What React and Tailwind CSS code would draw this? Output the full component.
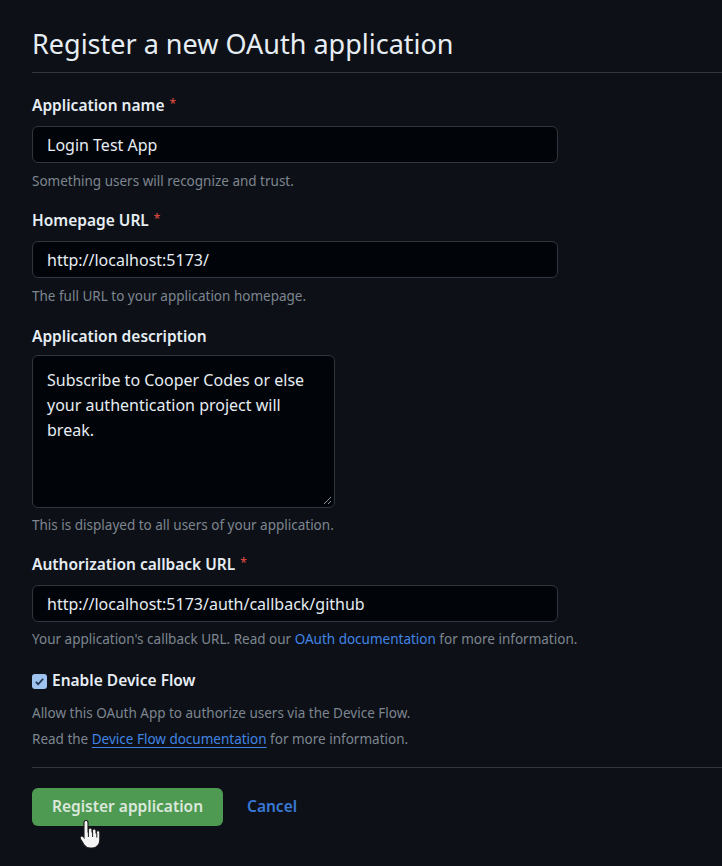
import React from 'react';

// Shared field styles
const font = "font-['Noto_Sans','Open_Sans',sans-serif]";

const Label = ({ children, required }) => (
  <div className="h-5 text-[15.5px] leading-5 font-semibold text-[#e6edf3]">
    {children}
    {required && <span className="relative -top-[3px] ml-[5px] text-[12px] text-[#d1453f]">*</span>}
  </div>
);

const Hint = ({ children, className = '' }) => (
  <p className={`text-[13.5px] leading-[18px] text-[#7d8590] ${className}`}>{children}</p>
);

const TextInput = ({ value }) => (
  <div className="mt-[11px] flex h-[37px] w-[526px] items-center rounded-md border border-[#30363d] bg-[#010409] px-[14px] text-[16px] text-[#e6edf3]">
    {value}
  </div>
);

// Hand cursor drawn over the button
const HandCursor = () => (
  <svg className="absolute left-[78px] top-[818px]" width="26" height="32" viewBox="0 0 26 32">
    <path
      d="M8 2.5c1.2 0 2 .9 2 2V14h.4v-2.2c0-1.1.8-1.9 1.8-1.9s1.8.8 1.8 1.9V14h.4v-1.3c0-1 .8-1.8 1.8-1.8s1.8.8 1.8 1.8V15h.4v-.6c0-1 .7-1.7 1.7-1.7s1.7.7 1.7 1.7v7.3c0 4.6-3 8.3-7.6 8.3h-2.3c-2.6 0-4.4-1.2-5.8-3.3L2.5 21c-.6-.9-.4-2 .4-2.6.8-.6 1.9-.4 2.6.4l.5.7V4.5c0-1.1.8-2 2-2z"
      fill="#f4f4f4"
      stroke="#1a1a1a"
      strokeWidth="1.1"
    />
    <path d="M10.4 14v5M14.6 14v5M18.8 15v4.5" stroke="#1a1a1a" strokeWidth="1" />
  </svg>
);

export default function App() {
  return (
    <div className={`relative min-h-[866px] w-full overflow-hidden bg-[#0d1117] pl-8 ${font}`}>
      {/* Page heading */}
      <div className="border-b border-[#30363d] pt-[26px] pb-[10px]">
        <h1 className="text-[27px] leading-9 font-normal text-[#e6edf3]">Register a new OAuth application</h1>
      </div>

      <div className="pt-[22px]">
        <Label required>Application name</Label>
        <TextInput value="Login Test App" />
        <Hint className="mt-[9px]">Something users will recognize and trust.</Hint>

        <div className="mt-[20px]">
          <Label required>Homepage URL</Label>
          <TextInput value="http://localhost:5173/" />
          <Hint className="mt-[9px]">The full URL to your application homepage.</Hint>
        </div>

        <div className="mt-[21px]">
          <Label>Application description</Label>
          <div className="relative mt-[9px] h-[153px] w-[303px] rounded-md border border-[#30363d] bg-[#010409] px-[14px] py-[12px] text-[16px] leading-[25px] text-[#e6edf3]">
            Subscribe to Cooper Codes or else your authentication project will break.
            <svg className="absolute right-[2px] bottom-[2px]" width="9" height="9" viewBox="0 0 9 9">
              <path d="M8 1L1 8M8 5L5 8" stroke="#8b949e" strokeWidth="1" />
            </svg>
          </div>
          <Hint className="mt-[8px]">This is displayed to all users of your application.</Hint>
        </div>

        <div className="mt-[20px]">
          <Label required>Authorization callback URL</Label>
          <TextInput value="http://localhost:5173/auth/callback/github" />
          <Hint className="mt-[8px]">
            Your application's callback URL. Read our{' '}
            <span className="text-[#4184e4]">OAuth documentation</span> for more information.
          </Hint>
        </div>

        {/* Device flow checkbox */}
        <div className="mt-[23px] flex h-5 items-center gap-[5px]">
          <span className="flex h-[15px] w-[15px] items-center justify-center rounded-[3px] bg-[#9fc3ef]">
            <svg width="11" height="11" viewBox="0 0 12 12">
              <path d="M2 6.5l2.5 2.5L10 3" fill="none" stroke="#1f3550" strokeWidth="2" />
            </svg>
          </span>
          <span className="text-[15.5px] font-semibold text-[#e6edf3]">Enable Device Flow</span>
        </div>
        <div className="mt-[9px] text-[13.5px] leading-[26px] text-[#7d8590]">
          <p>Allow this OAuth App to authorize users via the Device Flow.</p>
          <p>
            Read the{' '}
            <span className="text-[#4184e4] underline underline-offset-[3px]">Device Flow documentation</span> for more
            information.
          </p>
        </div>
      </div>

      <div className="mt-[15px] border-t border-[#30363d] pt-[20px]">
        <div className="flex items-center gap-6">
          <button className="h-[38px] w-[191px] rounded-md bg-[#4e9a52] text-[15.5px] font-semibold text-[#dbe8dc]">
            Register application
          </button>
          <span className="text-[15.5px] font-semibold text-[#3a78d8]">Cancel</span>
        </div>
      </div>

      <HandCursor />
    </div>
  );
}
